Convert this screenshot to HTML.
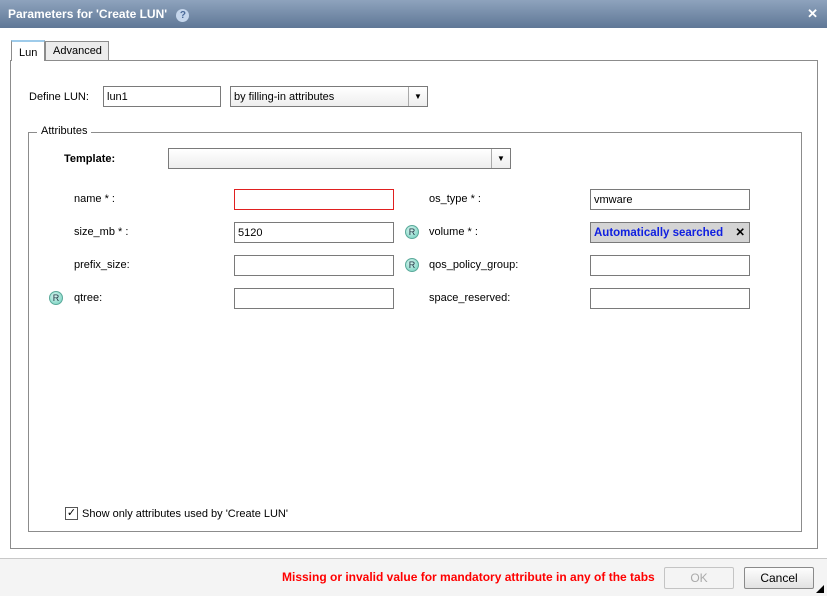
<!DOCTYPE html>
<html><head><style>
*{box-sizing:border-box;margin:0;padding:0}
body{width:827px;height:596px;overflow:hidden;background:#fff;font-family:"Liberation Sans",Tahoma,sans-serif;font-size:11px;color:#000;position:relative}
.abs{position:absolute}
.title{left:0;top:0;width:827px;height:28px;background:linear-gradient(#8ea3bd,#5f7796);color:#fff;font-weight:bold;font-size:12px;padding:7px 0 0 8px}
.inp{position:absolute;height:21px;border:1px solid #7a7a7a;background:#fff;padding:0 3px;line-height:19px;padding-top:1px;font-size:11px}
.lbl{position:absolute;font-size:11px}
.r{position:absolute;width:14px;height:14px;border-radius:50%;background:radial-gradient(circle at 40% 35%,#d6f5ee,#6fcfbd);border:1px solid #5aa99a;font-size:9px;text-align:center;line-height:12px;color:#234}
.btn{position:absolute;height:22px;border:1px solid #8a8a8a;border-radius:2px;background:linear-gradient(#fdfdfd,#e2e2e2);text-align:center;line-height:20px;font-size:12px}
</style></head><body>
<div class="abs title">Parameters for 'Create LUN' <span style="display:inline-block;width:13px;height:13px;border-radius:50%;background:#c5d6ec;color:#4a6a99;font-size:10px;text-align:center;line-height:13px;margin-left:6px">?</span><span style="position:absolute;right:9px;top:6px;font-size:13px">✕</span></div>
<div class="abs" style="left:10px;top:60px;width:808px;height:489px;border:1px solid #8c8c8c"></div>
<div class="abs" style="left:11px;top:40px;width:34px;height:21px;border:1px solid #8c8c8c;border-bottom:none;border-top:2px solid #9ecbea;background:#fff;padding:5px 0 0 7px">Lun</div>
<div class="abs" style="left:45px;top:41px;width:64px;height:19px;border:1px solid #8c8c8c;border-bottom:none;background:#ececec;padding:3px 0 0 7px">Advanced</div>
<div class="lbl" style="left:29px;top:91px">Define LUN:</div>
<div class="inp" style="left:103px;top:86px;width:118px">lun1</div>
<div class="inp" style="left:230px;top:86px;width:198px;background:linear-gradient(#fff,#eee)">by filling-in attributes</div>
<div class="abs" style="left:408px;top:87px;width:19px;height:19px;border-left:1px solid #aaa;font-size:8px;text-align:center;line-height:19px">▼</div>
<div class="abs" style="left:28px;top:132px;width:774px;height:400px;border:1px solid #8c8c8c"></div>
<div class="lbl" style="left:37px;top:125px;background:#fff;padding:0 4px">Attributes</div>
<div class="lbl" style="left:64px;top:153px;font-weight:bold">Template:</div>
<div class="inp" style="left:168px;top:148px;width:343px;background:linear-gradient(#fff,#eee)"></div>
<div class="abs" style="left:491px;top:149px;width:19px;height:19px;border-left:1px solid #aaa;font-size:8px;text-align:center;line-height:19px">▼</div>
<div class="lbl" style="left:74px;top:193px">name * :</div>
<div class="inp" style="left:234px;top:189px;width:160px;border-color:#e02020"></div>
<div class="lbl" style="left:74px;top:226px">size_mb * :</div>
<div class="inp" style="left:234px;top:222px;width:160px">5120</div>
<div class="lbl" style="left:74px;top:259px">prefix_size:</div>
<div class="inp" style="left:234px;top:255px;width:160px"></div>
<div class="r" style="left:49px;top:291px">R</div>
<div class="lbl" style="left:74px;top:292px">qtree:</div>
<div class="inp" style="left:234px;top:288px;width:160px"></div>
<div class="lbl" style="left:429px;top:193px">os_type * :</div>
<div class="inp" style="left:590px;top:189px;width:160px">vmware</div>
<div class="r" style="left:405px;top:225px">R</div>
<div class="lbl" style="left:429px;top:226px">volume * :</div>
<div class="inp" style="left:590px;top:222px;width:160px;background:#d4d4d4;color:#1020e0;font-weight:bold;font-size:11.5px">Automatically searched<span style="position:absolute;right:4px;color:#000">✕</span></div>
<div class="r" style="left:405px;top:258px">R</div>
<div class="lbl" style="left:429px;top:259px">qos_policy_group:</div>
<div class="inp" style="left:590px;top:255px;width:160px"></div>
<div class="lbl" style="left:429px;top:292px">space_reserved:</div>
<div class="inp" style="left:590px;top:288px;width:160px"></div>
<div class="abs" style="left:65px;top:507px;width:13px;height:13px;border:1px solid #555;background:#fff;font-size:11px;line-height:11px;text-align:center">✓</div>
<div class="lbl" style="left:82px;top:508px">Show only attributes used by 'Create LUN'</div>
<div class="abs" style="left:0;top:558px;width:827px;height:38px;background:#f4f4f4;border-top:1px solid #c8c8c8"></div>
<div class="lbl" style="left:282px;top:570px;color:#f00;font-weight:bold;font-size:12px">Missing or invalid value for mandatory attribute in any of the tabs</div>
<div class="btn" style="left:664px;top:567px;width:70px;color:#aaa;border-color:#c4c4c4;background:#f4f4f4">OK</div>
<div class="btn" style="left:744px;top:567px;width:70px">Cancel</div>
<div class="abs" style="left:816px;top:585px;width:0;height:0;border-left:8px solid transparent;border-bottom:8px solid #000"></div>
</body></html>
